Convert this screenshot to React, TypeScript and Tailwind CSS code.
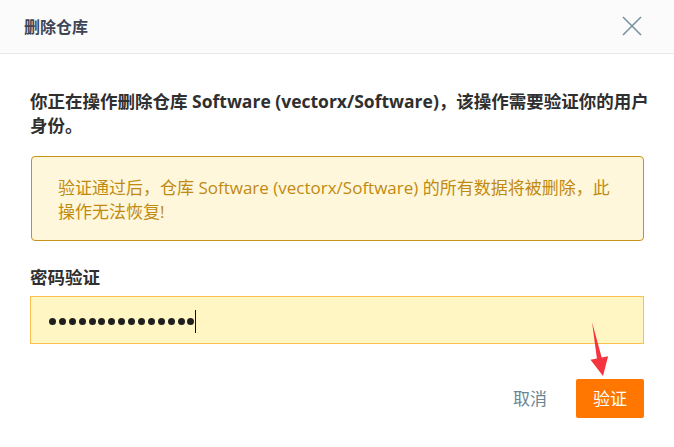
import React from "react";

const font = "font-['Open_Sans','Noto_Sans_CJK_SC',sans-serif]";

function CloseIcon() {
  return (
    <svg width="20" height="20" viewBox="0 0 20 20" fill="none">
      <path d="M1 1L19 19M19 1L1 19" stroke="#7a93a1" strokeWidth="1.6" />
    </svg>
  );
}

function Arrow() {
  return (
    <svg className="pointer-events-none absolute left-0 top-0" width="674" height="447">
      <polygon
        points="592,322 601.7,357.5 608.1,356.2 603,376 590.5,359.8 596.9,358.5"
        fill="#f4353f"
      />
    </svg>
  );
}

export default function App() {
  const dots = Array.from({ length: 15 });

  return (
    <div className={`relative w-[674px] h-[447px] bg-white overflow-hidden ${font}`}>
      <div className="flex h-[54px] items-center justify-between border-b border-[#e2e8ec] bg-[#fbfbfb] pl-[24px] pr-[32px]">
        <h2 className="text-[16px] font-bold text-[#3e4656]">删除仓库</h2>
        <button className="mt-[-2px]">
          <CloseIcon />
        </button>
      </div>

      <div className="px-[30px]">
        <p className="mt-[35px] whitespace-nowrap text-[17.5px] font-bold leading-[24px] text-[#2f2f2f]">
          你正在操作删除仓库 Software (vectorx/Software)，该操作需要验证你的用户
          <br />
          身份。
        </p>

        <div className="mt-[19px] ml-px whitespace-nowrap rounded-[4px] border border-[#c6921a] bg-[#fff7dc] pl-[26px] pt-[19px] pb-[16px] text-[17px] leading-[24px] text-[#c08a10]">
          验证通过后，仓库 Software (vectorx/Software) 的所有数据将被删除，此
          <br />
          操作无法恢复!
        </div>

        <p className="mt-[24px] text-[17.5px] font-bold leading-[24px] text-[#2f2f2f]">密码验证</p>

        <div className="mt-[7px] flex h-[48px] items-center border border-[#fbc150] bg-[#fff6c4] pl-[18px]">
          <div className="flex items-center gap-[2.9px] pt-[3px]">
            {dots.map((_, i) => (
              <span key={i} className="h-[7px] w-[7px] rounded-full bg-[#1f1f1f]" />
            ))}
          </div>
          <span className="ml-[1px] mt-[2px] h-[23px] w-px bg-[#111]" />
        </div>

        <div className="mt-[35px] flex items-center justify-end">
          <button className="mr-[29px] text-[17px] text-[#6a8593]">取消</button>
          <button className="h-[39px] w-[68px] rounded-[2px] bg-[#ff7700] text-[17px] text-white">
            验证
          </button>
        </div>
      </div>

      <Arrow />
    </div>
  );
}
